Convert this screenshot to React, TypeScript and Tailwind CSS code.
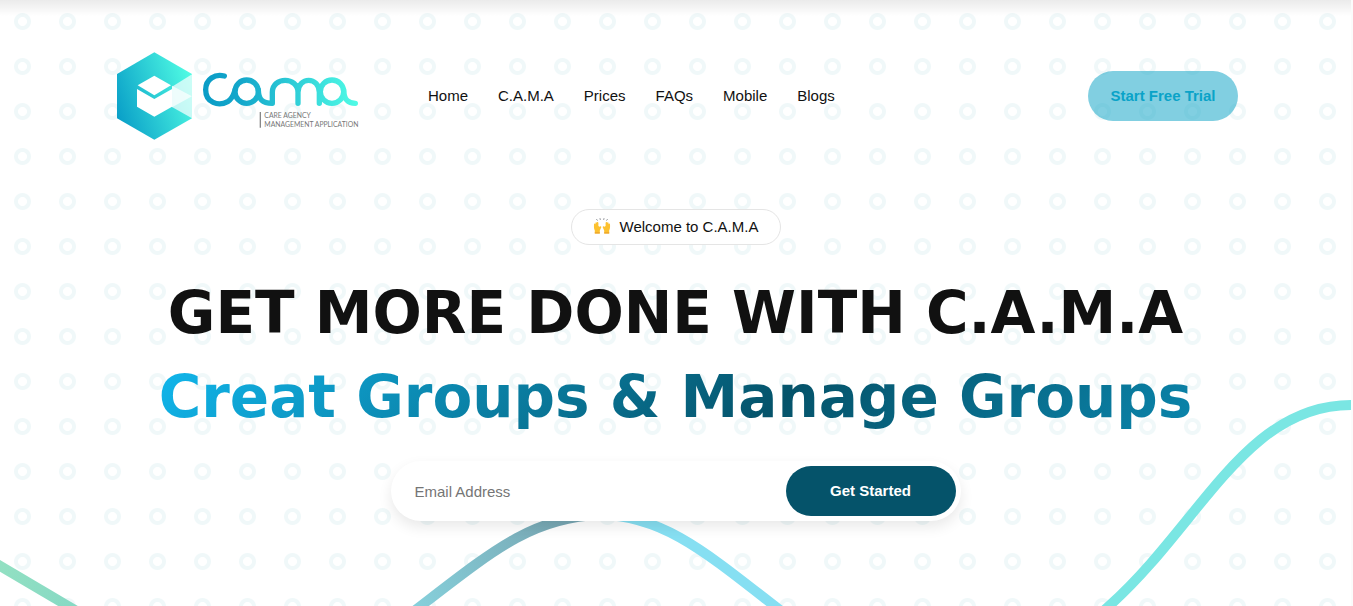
import React from "react";

const links = ["Home", "C.A.M.A", "Prices", "FAQs", "Mobile", "Blogs"];

function Logo() {
  return (
    <svg viewBox="39 30 744 276" className="h-[92px] w-[248px]" role="img" aria-label="Cama">
      <defs>
        <linearGradient id="hex" x1="0" y1="0.7" x2="1" y2="0.3">
          <stop offset="0" stopColor="#0aa0c8" />
          <stop offset="1" stopColor="#4ffbe3" />
        </linearGradient>
        <linearGradient id="word" gradientUnits="userSpaceOnUse" x1="310" y1="0" x2="775" y2="0">
          <stop offset="0" stopColor="#0a9cc6" />
          <stop offset="0.25" stopColor="#14a8cb" />
          <stop offset="1" stopColor="#50fce6" />
        </linearGradient>
      </defs>
      <path d="M163 37 276 102V235L163 299 51 235V102Z" fill="url(#hex)" />
      <path d="M113 136 163 107 213 136 163 166Z" fill="#fff" />
      <path d="M111 147 163 177 216 147V200L163 230 111 200Z" fill="#fff" />
      <path d="M216 140 276 103V169L216 202Z" fill="#fff" fillOpacity="0.7" />
      <path d="M216 137 276 169V235L216 201Z" fill="#fff" fillOpacity="0.7" />
      <g fill="none" stroke="url(#word)" strokeWidth="16" strokeLinecap="round" strokeLinejoin="round">
        <path d="M373 108C345 100 317 118 317 149C317 188 355 200 383 185C400 175 402 158 406 148" />
        <circle cx="440" cy="155" r="35" />
        <path d="M475 150C476 178 486 190 517 190V157C517 109 594 109 594 157V190M594 157C594 109 658 109 658 157V190" />
        <circle cx="696" cy="155" r="35" />
        <path d="M731 150C732 180 745 190 766 190" />
      </g>
      <path d="M481 216V263" stroke="#888" strokeWidth="4" />
      <text x="493" y="235" fontSize="20.500" fill="#777" fontFamily="Lato, sans-serif">CARE AGENCY</text>
      <text x="493" y="260" fontSize="20.500" fill="#777" fontFamily="Lato, sans-serif">MANAGEMENT APPLICATION</text>
    </svg>
  );
}

function RaisedHands() {
  return (
    <svg viewBox="0 0 18 18" className="size-[18px]" aria-hidden="true">
      <path d="M1 6.5C1 5.2 2.4 5.2 2.5 6.5V4.8C2.7 3.9 4 4 4 5V4.5C4.3 3.7 5.4 4 5.4 5V8L6.5 8.8C7.6 7.500 8.600 8.300 8.200 9.500L6.800 12.500V15.500H1.800V12.500C1 11 .8 9 1 6.500Z" fill="#fcc12f" />
      <path d="M17 6.5C17 5.2 15.600 5.2 15.500 6.5V4.800C15.300 3.900 14 4 14 5V4.500C13.700 3.700 12.600 4 12.600 5V8L11.500 8.800C10.400 7.500 9.400 8.300 9.800 9.500L11.200 12.500V15.500H16.200V12.500C17 11 17.200 9 17 6.500Z" fill="#fcc12f" />
      <path d="M1.800 14.800H6.800M11.200 14.800H16.200" stroke="#eba22c" strokeWidth="1.200" />
      <path d="M3.500 1.200 4.500 2.500M7 .3 7.300 1.800M11 .3 10.700 1.800M14.500 1.200 13.500 2.500" stroke="#6f747c" strokeWidth=".9" />
    </svg>
  );
}

function Waves() {
  return (
    <svg
      viewBox="0 0 1351 606"
      preserveAspectRatio="xMidYMin slice"
      className="pointer-events-none absolute inset-0 h-full w-full"
      fill="none"
      strokeWidth="10"
      aria-hidden="true"
    >
      <defs>
        <linearGradient id="mid" gradientUnits="userSpaceOnUse" x1="410" y1="606" x2="560" y2="520">
          <stop offset="0" stopColor="#86d1dc" />
          <stop offset="1" stopColor="#78a7b3" />
        </linearGradient>
        <linearGradient id="left" gradientUnits="userSpaceOnUse" x1="0" y1="566" x2="80" y2="606">
          <stop offset="0" stopColor="#92e0c2" />
          <stop offset="1" stopColor="#86d9c4" />
        </linearGradient>
      </defs>
      <path d="M-10 560 90 619" stroke="url(#left)" />
      <path d="M409 615C490 553 530 517 600 515" stroke="url(#mid)" />
      <path d="M600 515C665 515 710 556 785 614" stroke="#86dff2" />
      <path d="M1099 615 1109 606C1200 525 1245 405 1351 405" stroke="#7ae6e3" />
    </svg>
  );
}

export default function App() {
  return (
    <div className="min-h-screen bg-[#fbfbfb] pr-[2px] font-['Liberation_Sans',Arial,sans-serif] text-[15px] text-[#111]">
      <div className="relative min-h-screen overflow-hidden bg-white bg-[radial-gradient(circle_at_center,transparent_4px,#f0f8f9_5px,#f0f8f9_8px,transparent_9px)] bg-[size:45px_45px] bg-[position:0px_-1px]">
        <div className="absolute inset-x-0 top-0 h-4 bg-linear-to-b from-black/8 to-transparent" />
        <Waves />
        <div className="relative">
          <header className="mx-auto flex max-w-[1125px] items-center pt-[50px]">
            <a href="#" aria-label="Cama home">
              <Logo />
            </a>
            <nav className="ml-[67px] flex gap-[30px]">
              {links.map((l) => (
                <a key={l} href="#">
                  {l}
                </a>
              ))}
            </nav>
            <a
              href="#"
              className="ml-auto flex h-[50px] w-[150px] items-center justify-center rounded-full bg-[#04a0c3]/50 font-bold text-[#0aa3c8]"
            >
              Start Free Trial
            </a>
          </header>
          <main className="flex flex-col items-center pt-[67px]">
            <p className="flex h-9 w-[210px] items-center justify-center gap-[9px] rounded-full border border-[#e5e5e5] bg-white">
              <RaisedHands />
              Welcome to C.A.M.A
            </p>
            <h1 className="mt-[26px] text-center font-['DejaVu_Sans',sans-serif] text-[58px] leading-[84px] font-bold whitespace-nowrap">
              GET MORE DONE WITH C.A.M.A
              <span className="mx-auto block w-fit bg-linear-[135deg,#11b8ee_0%,#05536a_60%,#0b86ad_100%] bg-clip-text text-transparent">
                Creat Groups &amp; Manage Groups
              </span>
            </h1>
            <form
              onSubmit={(e) => e.preventDefault()}
              className="mt-[22px] flex h-[60px] w-[570px] max-w-full items-center rounded-full bg-white p-[5px] shadow-[0_6px_14px_rgba(0,0,0,0.09)]"
            >
              <input
                type="email"
                aria-label="Email Address"
                placeholder="Email Address"
                className="h-full min-w-0 flex-1 bg-transparent pl-[19px] outline-none placeholder:text-[#757575]"
              />
              <button type="submit" className="h-[50px] w-[170px] rounded-full bg-[#05536a] font-bold text-white">
                Get Started
              </button>
            </form>
          </main>
        </div>
      </div>
    </div>
  );
}
